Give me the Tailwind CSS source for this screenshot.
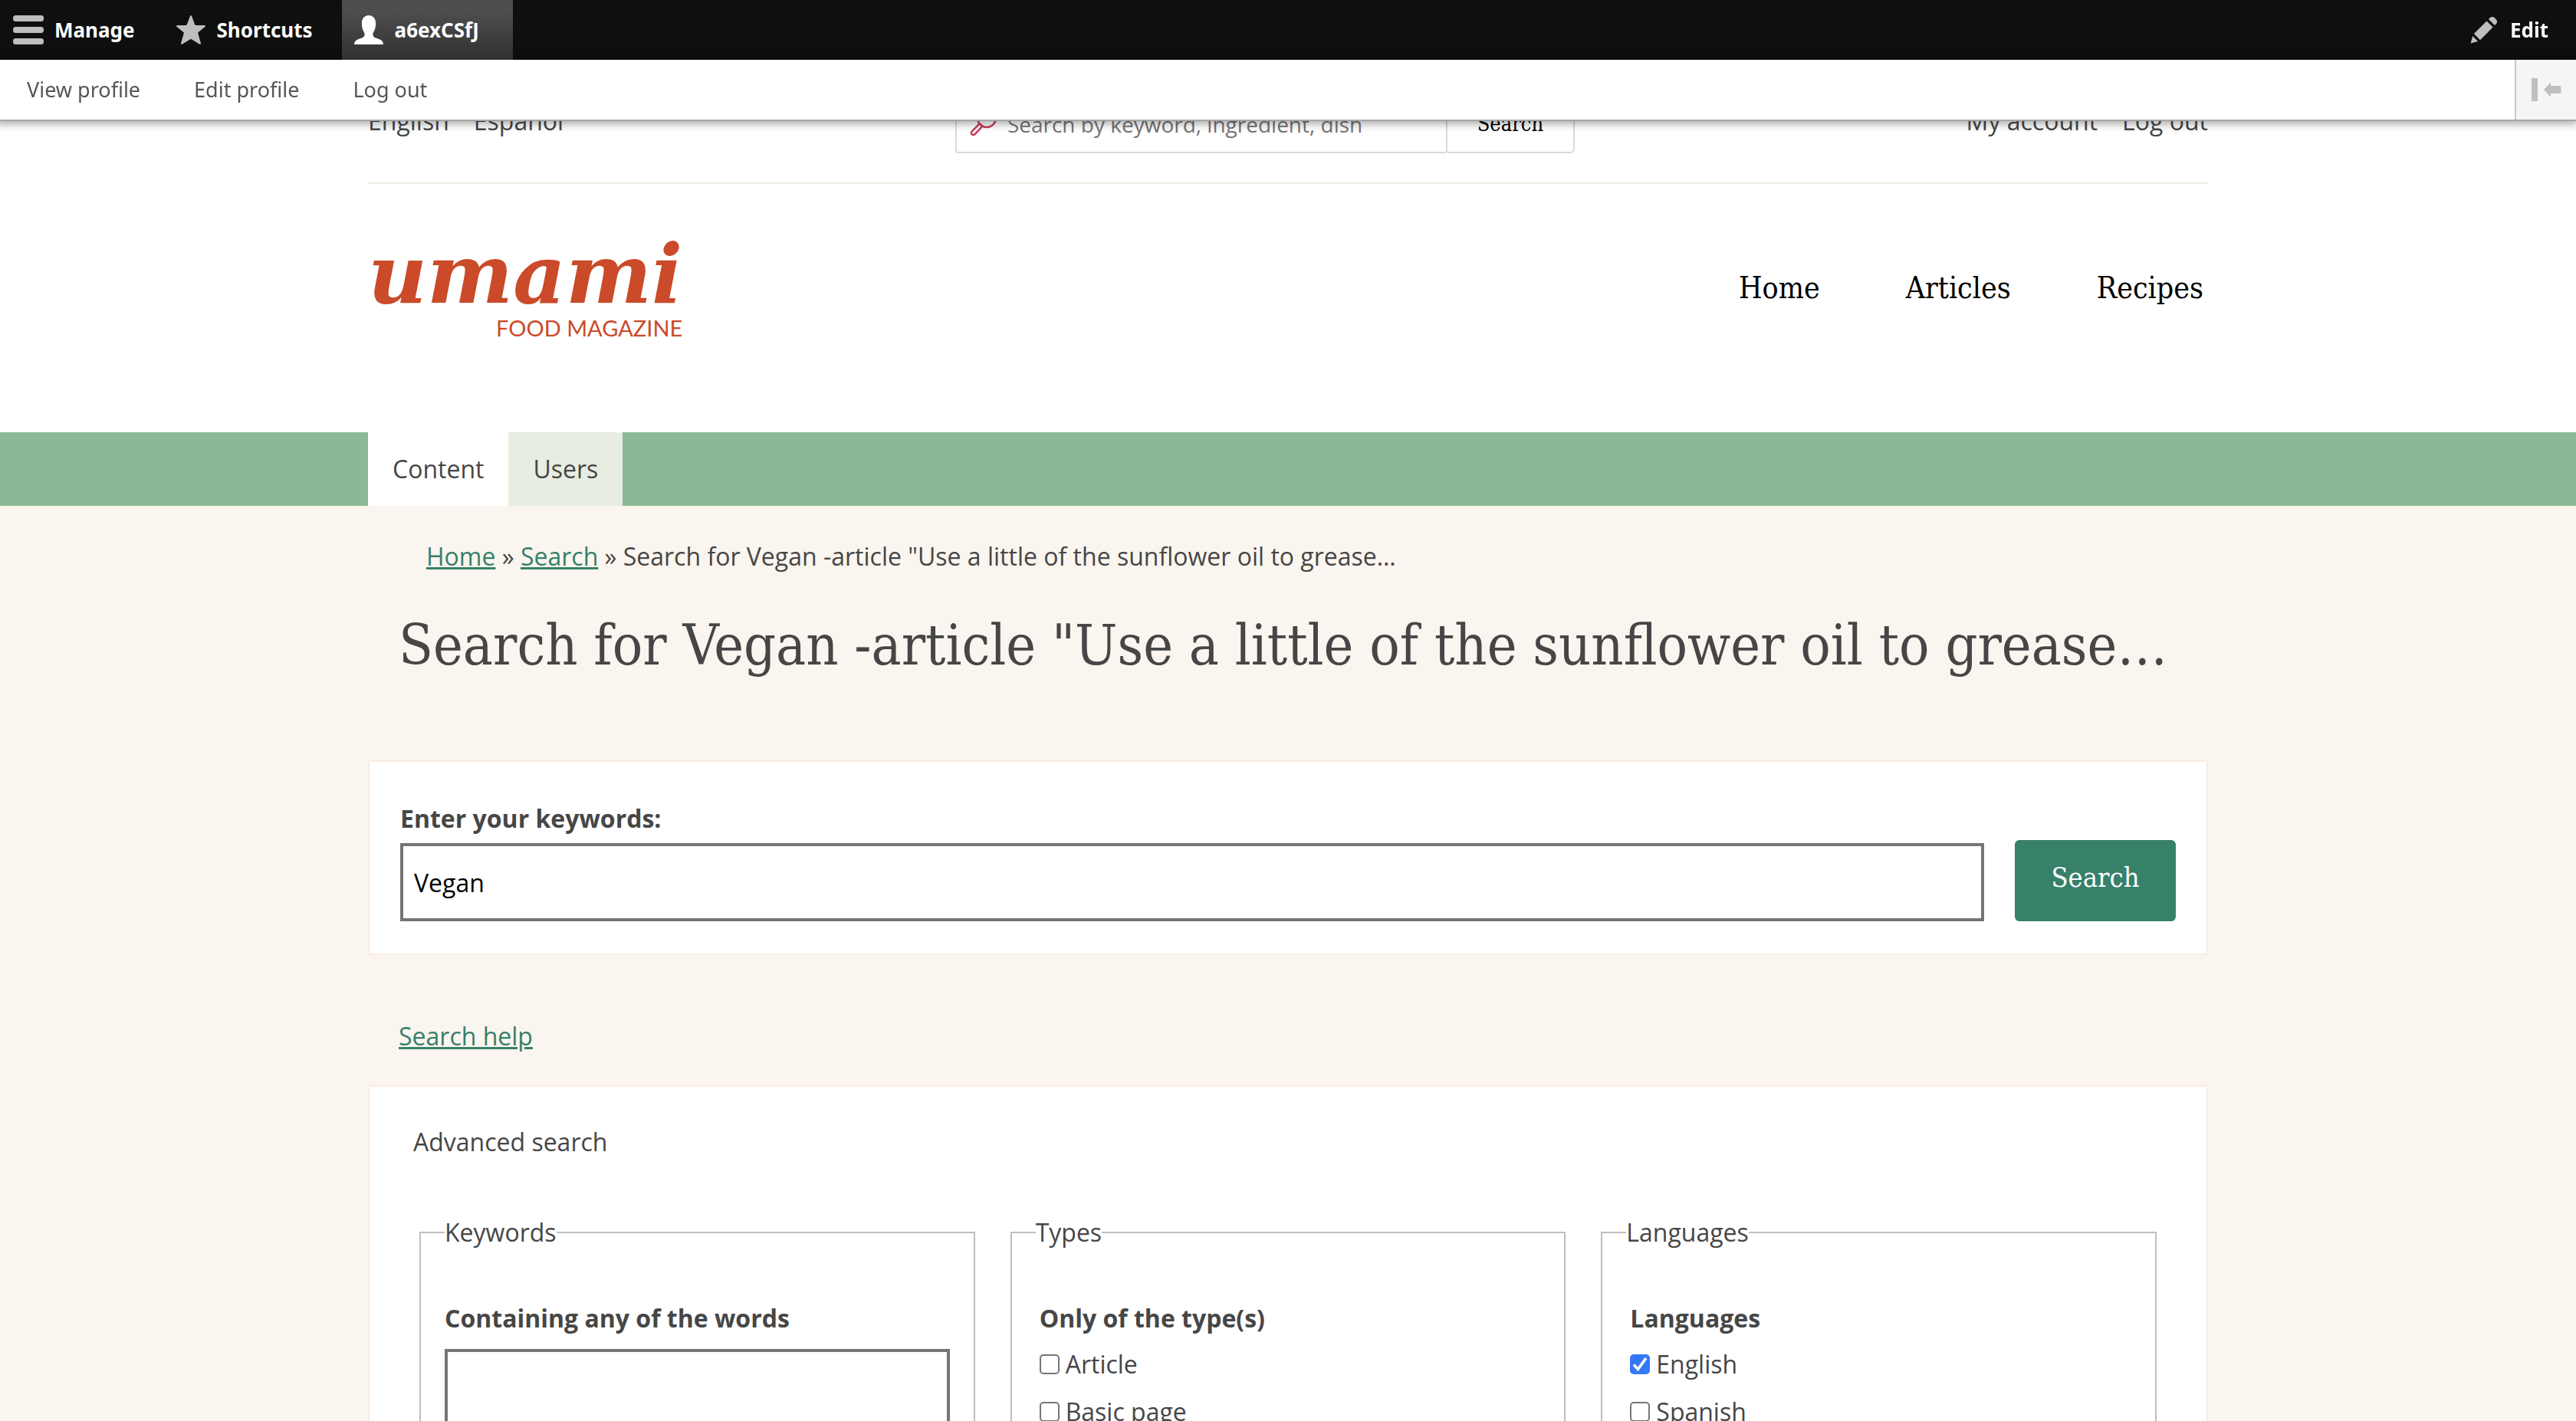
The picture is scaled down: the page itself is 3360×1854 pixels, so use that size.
<!DOCTYPE html>
<html lang="en" class="overflow-x-hidden">
<head>
<meta charset="utf-8">
<title>Search | Umami Food Magazine</title>
<script src="https://cdn.jsdelivr.net/npm/@tailwindcss/browser@4"></script>
</head>
<body class="bg-[#faf5ee] font-['Open_Sans',sans-serif] text-[32px] leading-[48px] text-[#464646]">

<!-- Administration toolbar -->
<div class="fixed inset-x-0 top-0 z-10 font-['Noto_Sans',sans-serif]">
  <nav aria-label="Toolbar" class="flex h-[78px] items-stretch bg-[#0f0f0f] text-[26px] leading-[36px] font-bold text-white">
    <a href="#" class="flex items-center gap-3.5 pr-[38px] pl-[17px]">
      <svg class="size-10" viewBox="0 0 40 40" fill="#bebebe" aria-hidden="true"><rect y="1" width="40" height="8" rx="3.5"/><rect y="16" width="40" height="8" rx="3.5"/><rect y="31" width="40" height="8" rx="3.5"/></svg>
      Manage
    </a>
    <a href="#" class="flex items-center gap-3.5 pr-[38px] pl-[15px]">
      <svg class="size-10" viewBox="0 0 40 40" fill="#bebebe" aria-hidden="true"><path d="M20 1.3c.7 0 1.100.5 1.300 1.200l3.800 10.500c.3.600.8.900 1.400.9h11c1.600 0 2 1.100.900 2l-8.600 7c-.5.400-.7 1-.5 1.600l3.600 12.700c.3 1.400-.6 2.200-1.900 1.400l-10.200-6.300c-.5-.3-1.100-.3-1.600 0L9 38.600c-1.300.8-2.200 0-1.900-1.400l3.600-12.700c.2-.6 0-1.200-.5-1.600l-8.600-7c-1.100-.9-.7-2 .9-2h11c.6 0 1.100-.3 1.400-.9l3.800-10.500c.2-.7.6-1.200 1.300-1.200z"/></svg>
      Shortcuts
    </a>
    <a href="#" class="flex items-center gap-3.5 bg-linear-to-b from-[#4d4d4d] from-20% to-[#313131] pr-11 pl-[15px]">
      <svg class="size-10" viewBox="0 0 40 40" fill="#fff" aria-hidden="true"><path d="M20 1c5.500 0 9.300 4.500 9.100 10.500-.1 4.500-.8 8.500-3 11.500-.8 1.200-.9 3.500-.2 5 .6 1.200 1.700 1.900 3.100 2.400 6.500 2.200 10 3.600 10 8.600H1c0-5 3.500-6.400 10-8.600 1.400-.5 2.500-1.200 3.100-2.400.7-1.500.6-3.800-.2-5-2.200-3-2.900-7-3-11.500C10.700 5.500 14.500 1 20 1z"/></svg>
      a6exCSfJ
    </a>
    <button type="button" class="ml-auto flex items-center gap-4 pr-9 pl-8">
      <svg class="size-9" viewBox="0 0 36 36" fill="#bebebe" aria-hidden="true"><path d="M25.500 2.500c1.800-2 4.500-2 6.300-.3l2 2c1.800 1.800 1.800 4.500-.2 6.300l-1.600 1.600-8.100-8.100z"/><path d="M21.500 6.500l8.100 8.100L13 31.200 4.900 23.100z"/><path d="M3.200 26l6.900 6.900L.6 35.500z"/></svg>
      Edit
    </button>
  </nav>
  <div class="flex h-20 items-stretch border-b-2 border-[#a6a6a6] bg-white text-[27px] leading-[36px] text-[#565656] shadow-[-2px_0_10px_4px_rgba(0,0,0,0.33)]">
    <a href="#" class="flex items-center px-[35px]">View profile</a>
    <a href="#" class="flex items-center px-[35px]">Edit profile</a>
    <a href="#" class="flex items-center px-[35px]">Log out</a>
    <button type="button" aria-label="Vertical orientation" class="ml-auto flex w-20 items-center justify-center border-l-2 border-[#c8c8c8] bg-[#f5f5f5]">
      <svg class="h-8 w-10" viewBox="0 0 40 32" fill="#bfbfbf" aria-hidden="true"><rect x="1" y="1" width="8" height="30"/><path d="M17 16l9-9.500V11h12a1.500 1.500 0 0 1 1.500 1.500v7A1.500 1.500 0 0 1 38 21H26v4.500z"/></svg>
    </button>
  </div>
</div>

<header class="bg-white pt-[124px]">
  <div class="mx-auto max-w-[2400px]">
    <div class="flex items-start justify-between border-b-2 border-[#e7ede0] pb-[38px]">
      <nav aria-label="Language" class="flex gap-8 pt-3 leading-[44px]"><a href="#">English</a><a href="#">Español</a></nav>
      <form class="flex h-[76px] w-[808px]">
        <label class="relative flex flex-1">
          <span class="sr-only">Search by keyword</span>
          <svg class="absolute top-[18px] left-[18px] size-9" viewBox="0 0 36 36" fill="none" stroke="#c93a5b" stroke-width="2.500" aria-hidden="true"><circle cx="23" cy="12" r="12"/><path d="M13.500 19.500L3.600 29.600a2.600 2.600 0 0 0 3.700 3.700l10.200-10.600M14 19.200l3.800 3.600"/></svg>
          <input type="search" placeholder="Search by keyword, ingredient, dish" class="w-full rounded-b-[4px] border-2 border-[#d9d9d9] bg-transparent pl-[66px] text-[28px] placeholder:text-[#757575]">
        </label>
        <button type="submit" class="w-[166px] rounded-br-[6px] border-2 border-l-0 border-[#d9d9d9] font-['DejaVu_Serif_Condensed','DejaVu_Serif',serif] text-[27px] leading-[36px] text-black">Search</button>
      </form>
      <nav aria-label="User account" class="flex gap-8 pt-3 leading-[44px]"><a href="#">My account</a><a href="#">Log out</a></nav>
    </div>
    <div class="flex items-start justify-between pt-[68px] pb-[118px]">
      <a href="#" class="flex flex-col items-end gap-0.5 text-[#ca4a29]">
        <span class="font-['DejaVu_Serif',serif] text-[106px] leading-[100px] font-bold italic">umami</span>
        <span class="font-['Lato',sans-serif] text-[29px] leading-[36px]">FOOD MAGAZINE</span>
      </a>
      <nav aria-label="Main" class="mt-10 flex gap-28 pr-1.5 font-['DejaVu_Serif_Condensed','DejaVu_Serif',serif] text-[39px] leading-[56px] text-black">
        <a href="#">Home</a><a href="#">Articles</a><a href="#">Recipes</a>
      </nav>
    </div>
  </div>
</header>

<nav aria-label="Search sections" class="bg-[#8aba95]">
  <div class="mx-auto flex max-w-[2400px]">
    <a href="#" class="bg-white px-8 py-6">Content</a>
    <a href="#" class="bg-[#e7ede0] px-8 py-6">Users</a>
  </div>
</nav>

<main class="mx-auto max-w-[2400px]">
  <nav aria-label="Breadcrumb" class="pt-[42px] pl-[76px]">
    <a href="#" class="text-[#37806a] underline">Home</a> » <a href="#" class="text-[#37806a] underline">Search</a> » Search for Vegan -article "Use a little of the sunflower oil to grease…
  </nav>
  <h1 class="mt-11 pl-10 font-['DejaVu_Serif_Condensed','DejaVu_Serif',serif] text-[73px] leading-[96px]">Search for Vegan -article "Use a little of the sunflower oil to grease…</h1>

  <form>
    <div class="mt-[102px] flex items-end gap-10 border-2 border-[#f9ede4] bg-white px-10 pt-[50px] pb-[42px]">
      <div class="flex flex-1 flex-col gap-2">
        <label for="keys" class="font-bold">Enter your keywords:</label>
        <input id="keys" type="text" value="Vegan" class="h-[102px] w-full border-4 border-[#757575] bg-white px-3.5 text-black">
      </div>
      <button type="submit" class="h-[106px] w-[210px] rounded-[6px] bg-[#37806a] pb-2 font-['DejaVu_Serif_Condensed','DejaVu_Serif',serif] text-[36px] leading-[48px] text-white">Search</button>
    </div>

    <p class="mt-[82px] pl-10"><a href="#" class="text-[#37806a] underline">Search help</a></p>

    <section class="mt-10 border-2 border-[#f9ede4] bg-white pt-12 pb-16">
      <h2 class="pl-[57px]">Advanced search</h2>
      <div class="mt-[70px] grid grid-cols-3 gap-[46px] px-[65px]">
        <fieldset class="border-2 border-[#bfbfbf] px-[31px] pb-8">
          <legend>Keywords</legend>
          <label for="any" class="mt-16 block font-bold">Containing any of the words</label>
          <input id="any" type="text" class="mt-4 h-[102px] w-full border-4 border-[#757575] bg-white px-3.5 text-black">
        </fieldset>
        <fieldset class="border-2 border-[#bfbfbf] px-[31px] pb-8">
          <legend>Types</legend>
          <div role="group" aria-labelledby="types" class="mt-16 flex flex-col gap-3.5 pl-[5px]">
            <span id="types" class="-mb-0.5 font-bold">Only of the type(s)</span>
            <label class="flex items-center gap-2"><input type="checkbox" class="size-[26px] appearance-none rounded-[5px] border-2 border-[#767676] bg-white">Article</label>
            <label class="flex items-center gap-2"><input type="checkbox" class="size-[26px] appearance-none rounded-[5px] border-2 border-[#767676] bg-white">Basic page</label>
          </div>
        </fieldset>
        <fieldset class="border-2 border-[#bfbfbf] px-[31px] pb-8">
          <legend>Languages</legend>
          <div role="group" aria-labelledby="langs" class="mt-16 flex flex-col gap-3.5 pl-[5px]">
            <span id="langs" class="-mb-0.5 font-bold">Languages</span>
            <label class="flex items-center gap-2">
              <span class="grid size-[26px]">
                <input type="checkbox" checked class="col-start-1 row-start-1 size-[26px] appearance-none rounded-[5px] bg-[#3478f6]">
                <svg class="col-start-1 row-start-1 size-[26px]" viewBox="0 0 26 26" fill="none" stroke="#fff" stroke-width="3.500" aria-hidden="true"><path d="M5 13.500l5.500 6L21 5"/></svg>
              </span>English</label>
            <label class="flex items-center gap-2"><input type="checkbox" class="size-[26px] appearance-none rounded-[5px] border-2 border-[#767676] bg-white">Spanish</label>
          </div>
        </fieldset>
      </div>
    </section>
  </form>
</main>
</body>
</html>
